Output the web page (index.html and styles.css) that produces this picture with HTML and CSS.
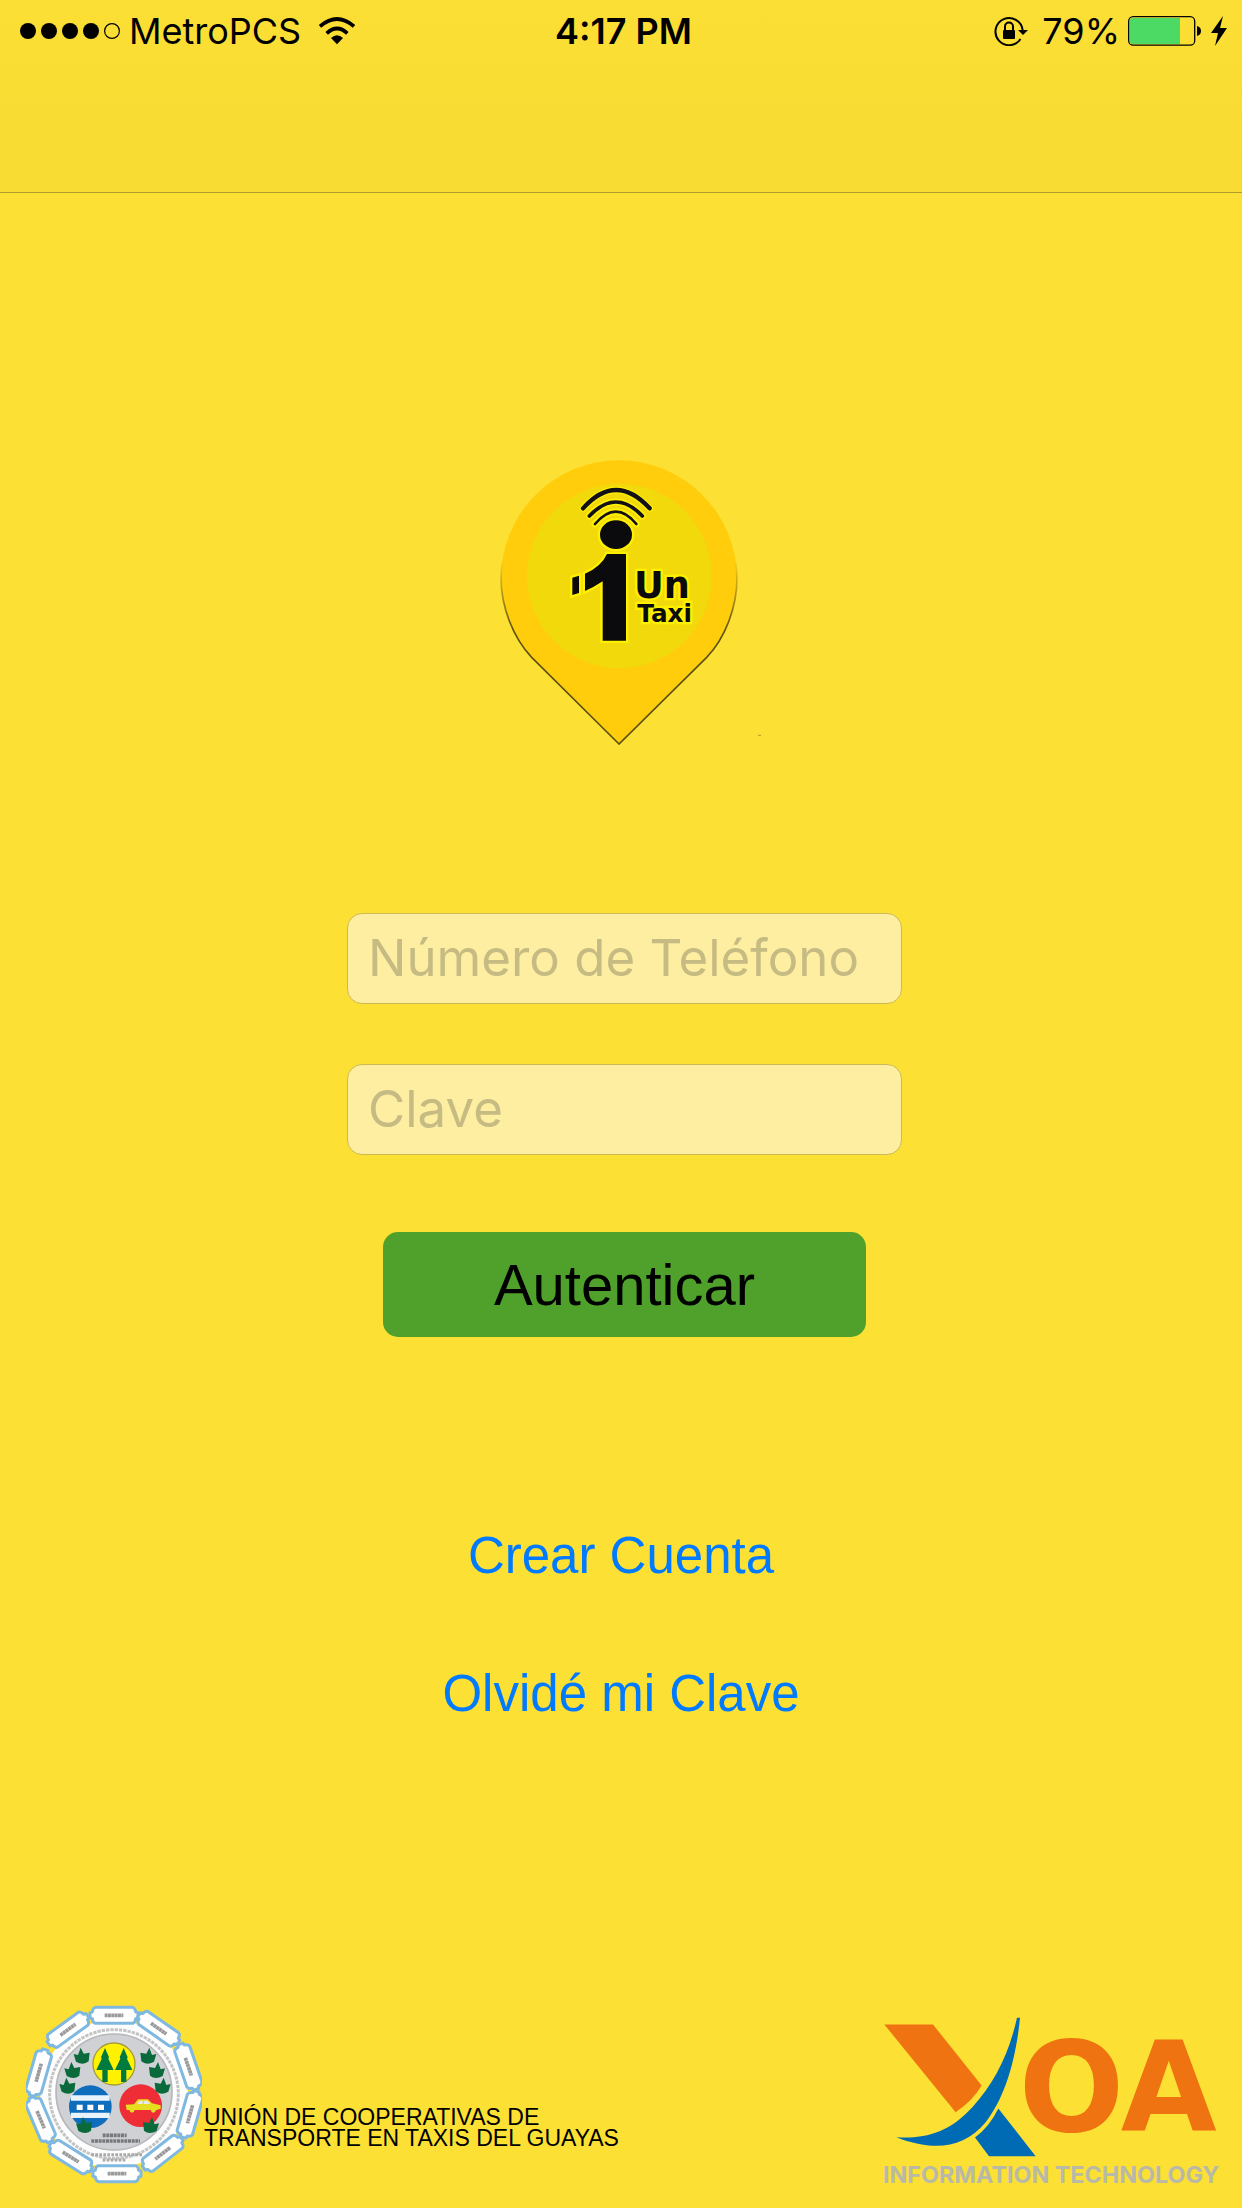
FILE: index.html
```html
<!DOCTYPE html>
<html lang="es">
<head>
<meta charset="utf-8">
<meta name="viewport" content="width=device-width, initial-scale=1">
<title>Un Taxi</title>
<link rel="stylesheet" href="styles.css">
</head>
<body>
<div class="screen">
  <header class="topbar">
    <div class="status">
      <div class="status-left">
        <svg class="signal" viewBox="0 0 100 16" aria-hidden="true">
          <circle cx="8" cy="8" r="8"/><circle cx="29" cy="8" r="8"/><circle cx="50" cy="8" r="8"/><circle cx="71" cy="8" r="8"/>
          <circle cx="92" cy="8" r="7.4" fill="none" stroke="#000" stroke-width="1.2"/>
        </svg>
        <span class="carrier">MetroPCS</span>
        <svg class="wifi" viewBox="0 0 108 82" aria-hidden="true">
          <path d="M3 27Q54 -17 105 27M23 48Q54 19 85 48" fill="none" stroke="#000" stroke-width="11"/>
          <path d="M54 81L36 62Q54 46 72 62Z"/>
        </svg>
      </div>
      <time class="clock">4:17 PM</time>
      <div class="status-right">
        <svg class="lock" viewBox="0 0 34 30" aria-hidden="true">
          <path d="M26.5 23A13.6 13.6 0 1 1 28.6 14" fill="none" stroke="#000" stroke-width="2"/>
          <path d="M24 14H34L29 19Z"/>
          <rect x="9" y="14" width="12" height="9" rx="1"/>
          <path d="M11 15V10.500A4 4 0 0 1 19 10.500V15" fill="none" stroke="#000" stroke-width="2"/>
        </svg>
        <span class="percent">79%</span>
        <svg class="battery" viewBox="0 0 74 30" aria-hidden="true">
          <rect x="0.700" y="0.700" width="66" height="28.500" rx="4.500" fill="none" stroke="#000" stroke-width="1.300"/>
          <path d="M5 2H52V28H5Q2 28 2 25V5Q2 2 5 2Z" fill="#4cd964"/>
          <path d="M69 10Q73 11 73 15T69 20Z"/>
        </svg>
        <svg class="bolt" viewBox="0 0 16 30" aria-hidden="true"><path d="M12 0L0 17H7L4 30L16 12H9Z"/></svg>
      </div>
    </div>
  </header>

  <main class="content">
    <svg class="pin" viewBox="0 0 900 960" role="img" aria-label="Un Taxi">
      <defs>
        <linearGradient id="edge" x1="0" y1="0" x2="0" y2="1">
          <stop offset="0.350" stop-color="#5d5010" stop-opacity="0"/>
          <stop offset="0.600" stop-color="#5d5010"/>
        </linearGradient>
      </defs>
      <path d="M417 912L155 652C100 594 63 500 63 415A354 354 0 0 1 771 415C771 500 736 594 680 652Z" fill="#ffcd0c" stroke="url(#edge)" stroke-width="5"/>
      <circle cx="418" cy="408" r="277" fill="#f1d90b"/>
      <g fill="#0b0b0d" stroke="#fff000" stroke-width="14" paint-order="stroke">
        <ellipse cx="408" cy="284" rx="48" ry="43"/>
        <path d="M381 342H438V602H368V424Q343 441 315 453V401Q363 381 381 342Z"/>
        <path d="M277 413L297 407V459L277 465Z"/>
        <text class="pin-un" x="462" y="473">Un</text>
        <text class="pin-taxi" x="472" y="545">Taxi</text>
      </g>
      <g fill="none" stroke-linecap="round">
        <path d="M309 205Q408 95 509 205M328 228Q408 144 487 228M345 252Q408 178 469 252" stroke="#fff000" stroke-width="21"/>
        <path d="M309 205Q408 95 509 205" stroke="#141018" stroke-width="13"/>
        <path d="M328 228Q408 144 487 228" stroke="#141018" stroke-width="11"/>
        <path d="M345 252Q408 178 469 252" stroke="#141018" stroke-width="8"/>
      </g>
      <path d="M834 886H843" stroke="#b9982a" stroke-width="3"/>
    </svg>

    <form class="login">
      <input class="field" type="tel" aria-label="Número de Teléfono" placeholder="Número de Teléfono">
      <input class="field" type="password" aria-label="Clave" placeholder="Clave">
      <button class="submit" type="submit">Autenticar</button>
    </form>

    <nav class="links">
      <a href="#crear">Crear Cuenta</a>
      <a href="#olvide">Olvidé mi Clave</a>
    </nav>
  </main>

  <footer class="footer">
    <div class="union">
      <svg class="crest" viewBox="48 42 528 540" aria-hidden="true">
        <defs>
          <g id="plate">
            <path d="M-56 -24H56Q64 -22 65 -10L72 -8V8L65 10Q64 22 56 24H-56Q-64 22 -65 10L-72 8V-8L-65 -10Q-64 -22 -56 -24Z" fill="#fff" stroke="#7fb8e0" stroke-width="9" stroke-linejoin="round"/>
            <path d="M-28 0H28" stroke="#9a9a9a" stroke-width="11" stroke-dasharray="9 1"/>
          </g>
          <path id="leaf" d="M-25 -8L-12 -5L-4 -27L5 -9L23 -12L20 14Q4 28 -18 15Z" fill="#0b6a3c"/>
          <path id="tree" d="M0 -48L12 -20L10 -16L26 18H8V54H-8V18H-26L-10 -16L-12 -20Z" fill="#007a3d"/>
        </defs>
        <circle cx="312" cy="312" r="222" fill="#fdfdfd"/>
        <circle cx="312" cy="312" r="193" fill="none" stroke="#c4c4c4" stroke-width="9" stroke-dasharray="10 3"/>
        <circle cx="312" cy="306" r="174" fill="#cfd1d4" stroke="#b5b7ba" stroke-width="5"/>
        <use href="#plate" transform="translate(312 76)"/>
        <use href="#plate" transform="translate(446 116) rotate(35)"/>
        <use href="#plate" transform="translate(535 230) rotate(71)"/>
        <use href="#plate" transform="translate(540 373) rotate(106)"/>
        <use href="#plate" transform="translate(458 490) rotate(142)"/>
        <use href="#plate" transform="translate(321 551)"/>
        <use href="#plate" transform="translate(182 501) rotate(32)"/>
        <use href="#plate" transform="translate(92 389) rotate(67)"/>
        <use href="#plate" transform="translate(86 248) rotate(106)"/>
        <use href="#plate" transform="translate(174 119) rotate(-36)"/>
        <circle cx="312" cy="222" r="63" fill="#fff200" stroke="#a39c3c" stroke-width="4"/>
        <use href="#tree" transform="translate(285 222)"/>
        <use href="#tree" transform="translate(341 222)"/>
        <circle cx="241" cy="350" r="64" fill="#0f6dbd"/>
        <path d="M183 324H299M183 376H299" stroke="#e8f3fb" stroke-width="16"/>
        <path d="M200 352H218M232 352H250M264 352H282" stroke="#fff" stroke-width="16"/>
        <circle cx="392" cy="347" r="64" fill="#ee2d36"/>
        <path d="M347 344L372 343L384 328H414L426 340L452 346V356L440 360H350Z" fill="#e6df1f"/>
        <path d="M382 342L388 332H398V342ZM402 342V332H412L420 342Z" fill="#e8e8ee"/>
        <circle cx="366" cy="361" r="7" fill="#e6df1f"/><circle cx="430" cy="361" r="7" fill="#e6df1f"/>
        <use href="#leaf" transform="translate(216 200)"/>
        <use href="#leaf" transform="translate(188 243)"/>
        <use href="#leaf" transform="translate(173 290)"/>
        <use href="#leaf" transform="translate(223 408)"/>
        <use href="#leaf" transform="translate(414 200) scale(-1 1)"/>
        <use href="#leaf" transform="translate(440 243) scale(-1 1)"/>
        <use href="#leaf" transform="translate(457 290) scale(-1 1)"/>
        <use href="#leaf" transform="translate(422 408) scale(-1 1)"/>
        <path d="M278 436H350M244 453H390" stroke="#77797c" stroke-width="11" stroke-dasharray="9 2"/>
        <path d="M244 494H396M278 510H348" stroke="#a9a9a9" stroke-width="9" stroke-dasharray="8 4"/>
      </svg>
      <p class="union-name">UNIÓN DE COOPERATIVAS DE<br>TRANSPORTE EN TAXIS DEL GUAYAS</p>
    </div>
    <svg class="yoa" viewBox="45 55 1002 500" role="img" aria-label="YOA Information Technology">
      <path d="M46 77H192L338 260Q310 307 260 340Z" fill="#ef7310"/>
      <path d="M444 57H453C440 190 405 300 350 370C280 455 185 455 82 415C190 422 255 385 310 325C375 255 420 165 444 57Z" fill="#006bb5"/>
      <path d="M388 329L500 472H360L318 416Q362 383 388 329Z" fill="#006bb5"/>
      <text class="yoa-name" x="449" y="398">OA</text>
      <text class="yoa-tag" x="42" y="552">INFORMATION TECHNOLOGY</text>
    </svg>
  </footer>
</div>
</body>
</html>
```
FILE: styles.css
```css
* { box-sizing: border-box; }

body {
  margin: 0;
  background: #fce033;
  color: #000;
  font-family: "Liberation Sans", Arial, sans-serif;
}

.screen {
  display: flex;
  flex-direction: column;
  min-height: 100vh;
}

.topbar {
  height: 193px;
  background: linear-gradient(#fbdf34, #f8db33);
  border-bottom: 1px solid #b19d2c;
}

.status {
  display: grid;
  grid-template-columns: 1fr auto 1fr;
  align-items: center;
  height: 61px;
  padding: 0 15px 0 20px;
  font-family: Inter, "Liberation Sans", sans-serif;
  font-size: 36px;
  line-height: 60px;
}

.status-left,
.status-right {
  display: flex;
  align-items: center;
}

.status-right { justify-content: flex-end; }

.signal { width: 100px; height: 16px; }
.carrier { margin: 0 18px 0 9px; }
.wifi { width: 36px; height: 28px; }
.clock { font-weight: 600; }
.lock { width: 34px; height: 30px; }
.percent { margin: 0 8px 0 14px; }
.battery { width: 74px; height: 30px; }
.bolt { width: 16px; height: 30px; margin-left: 9px; }

.content {
  display: flex;
  flex-direction: column;
  align-items: center;
  padding-top: 247px;
}

.pin { width: 300px; height: 320px; margin-left: 18px; }

.pin-un {
  font: bold 110px "DejaVu Sans", sans-serif;
}

.pin-taxi {
  font: bold 74px "DejaVu Sans", sans-serif;
}

.login {
  display: flex;
  flex-direction: column;
  align-items: center;
  width: 562px;
  max-width: 100%;
  margin-top: 153px;
  padding-left: 7px;
}

.field {
  width: 100%;
  height: 91px;
  margin-bottom: 60px;
  padding: 0 20px 2px;
  border: 1px solid #cdb955;
  border-radius: 15px;
  background: #fdeea1;
  color: #000;
  font-family: Inter, "Liberation Sans", sans-serif;
  font-size: 51px;
}

.field::placeholder { color: #c6bb83; opacity: 1; }

.submit {
  width: 483px;
  max-width: 100%;
  height: 105px;
  margin-top: 17px;
  padding: 0;
  border: 0;
  border-radius: 15px;
  background: #4fa12b;
  color: #000;
  font-family: inherit;
  font-size: 58px;
}

.links {
  display: flex;
  flex-direction: column;
  align-items: center;
  gap: 78px;
  margin-top: 189px;
  font-size: 51px;
  line-height: 60px;
}

.links a { color: #007aff; text-decoration: none; }

.footer {
  display: flex;
  justify-content: space-between;
  align-items: flex-end;
  margin-top: auto;
  padding: 0 24px 24px 26px;
}

.union { display: flex; align-items: flex-end; }
.crest { width: 176px; height: 180px; }

.union-name {
  margin: 0 0 35px 2px;
  font-size: 23px;
  line-height: 21px;
  white-space: nowrap;
}

.yoa { width: 334px; height: 167px; overflow: visible; }

.yoa-name {
  fill: #ef7310;
  font: bold 372px "DejaVu Sans", sans-serif;
}

.yoa-tag {
  fill: #b9b9a8;
  font: bold 70px Inter, sans-serif;
}
```
